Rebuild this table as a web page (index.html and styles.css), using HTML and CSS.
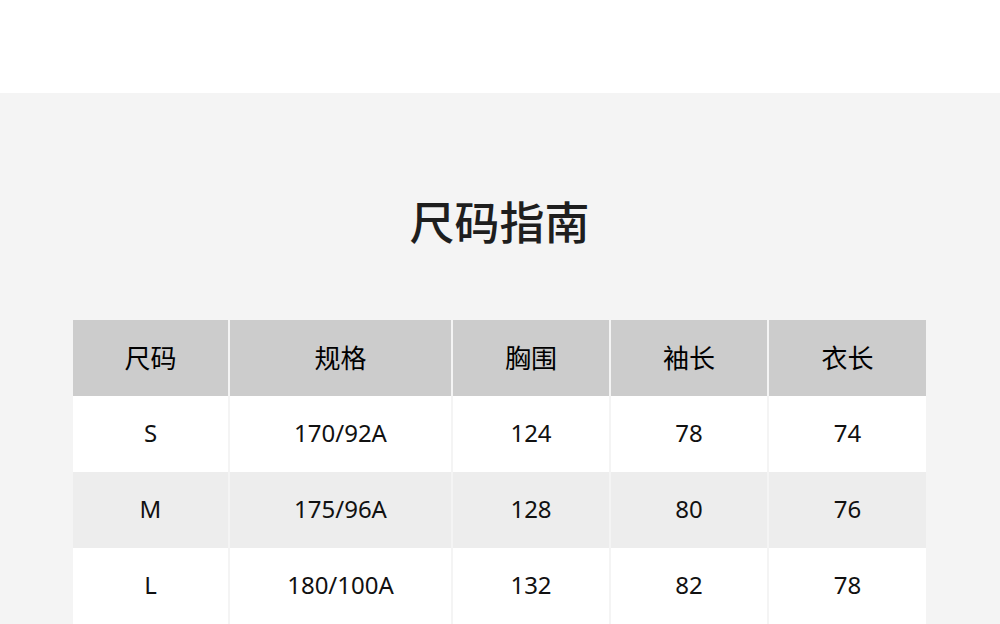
FILE: index.html
```html
<!DOCTYPE html>
<html lang="zh">
<head>
<meta charset="utf-8">
<title>尺码指南</title>
<link rel="stylesheet" href="styles.css">
</head>
<body>
<div class="topbar"></div>
<section class="guide">
  <h1 class="title">尺码指南</h1>
  <div class="table">
    <div class="row head">
      <div class="cell">尺码</div>
      <div class="cell">规格</div>
      <div class="cell">胸围</div>
      <div class="cell">袖长</div>
      <div class="cell">衣长</div>
    </div>
    <div class="row">
      <div class="cell">S</div>
      <div class="cell">170/92A</div>
      <div class="cell">124</div>
      <div class="cell">78</div>
      <div class="cell">74</div>
    </div>
    <div class="row alt">
      <div class="cell">M</div>
      <div class="cell">175/96A</div>
      <div class="cell">128</div>
      <div class="cell">80</div>
      <div class="cell">76</div>
    </div>
    <div class="row">
      <div class="cell">L</div>
      <div class="cell">180/100A</div>
      <div class="cell">132</div>
      <div class="cell">82</div>
      <div class="cell">78</div>
    </div>
  </div>
</section>
</body>
</html>
```
FILE: styles.css
```css
html, body {
  margin: 0;
  padding: 0;
  height: 100%;
  overflow: hidden;
}
body {
  background: #f4f4f4;
  font-family: "Noto Sans", "Noto Sans CJK SC", sans-serif;
  color: #111;
}
.topbar {
  height: 93px;
  background: #ffffff;
}
.guide {
  background: #f4f4f4;
  padding: 98px 74px 0 73px;
}
.title {
  margin: 0;
  height: 60px;
  line-height: 60px;
  text-align: center;
  font-family: "Noto Sans CJK SC", sans-serif;
  font-size: 45px;
  font-weight: 500;
  color: #1e1e1e;
}
.table {
  margin-top: 69px;
  width: 853px;
}
.row {
  display: grid;
  grid-template-columns: 155px 223px 158px 158px 159px;
  height: 76px;
  background: #ffffff;
}
.row.head {
  background: #cccccc;
}
.row.alt {
  background: #ededed;
}
.cell {
  box-sizing: border-box;
  display: flex;
  align-items: center;
  justify-content: center;
  padding-bottom: 3px;
  font-size: 24px;
  color: #111;
}
.cell + .cell {
  border-left: 2px solid #f4f4f4;
}
.head .cell {
  font-family: "Noto Sans CJK SC", sans-serif;
  font-size: 26px;
  padding-bottom: 4px;
  color: #000;
}
```
